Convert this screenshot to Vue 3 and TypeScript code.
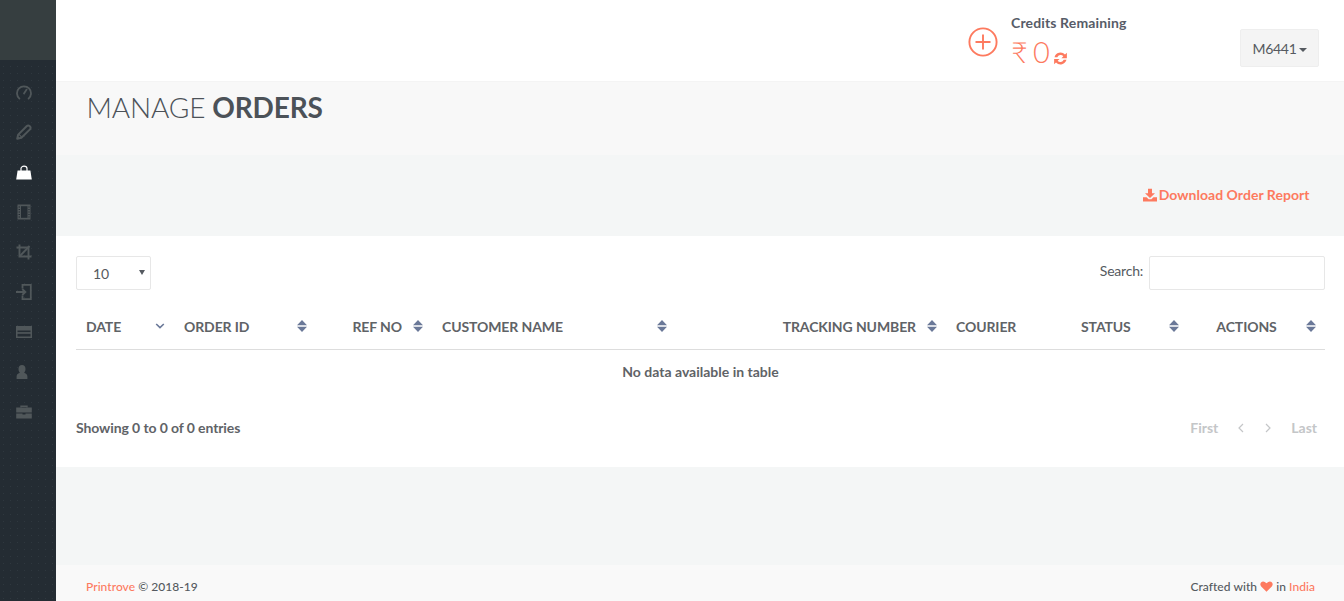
<script setup lang="ts">
interface Col { label: string; width: number; align: string; sort: string }
const cols: Col[] = [
  { label: 'DATE', width: 98, align: 'left', sort: 'down' },
  { label: 'ORDER ID', width: 142, align: 'left', sort: 'both' },
  { label: 'REF NO', width: 116, align: 'right', sort: 'both' },
  { label: 'CUSTOMER NAME', width: 244, align: 'left', sort: 'both' },
  { label: 'TRACKING NUMBER', width: 270, align: 'right', sort: 'both' },
  { label: 'COURIER', width: 125, align: 'left', sort: 'none' },
  { label: 'STATUS', width: 117, align: 'left', sort: 'both' },
  { label: 'ACTIONS', width: 137, align: 'center', sort: 'both' }
]
</script>

<template>
  <div class="page">
    <aside class="sidebar">
      <div class="brand"></div>
      <nav class="nav">
        <a class="nav-item">
          <svg viewBox="0 0 16 16" width="16" height="16"><path d="M3.4 14.6A7 7 0 1 1 12.6 14.6" fill="none" stroke="currentColor" stroke-width="1.8" stroke-linecap="round"/><path d="M8 9.4L10.6 5.6" stroke="currentColor" stroke-width="1.8" stroke-linecap="round"/></svg>
        </a>
        <a class="nav-item">
          <svg viewBox="0 0 16 16" width="16" height="16"><path d="M1.2 14.8L2.2 10.6L10.6 2.2Q12.2 .8 13.8 2.2L14 2.4Q15.2 3.8 14 5.4L5.4 13.8Z" fill="none" stroke="currentColor" stroke-width="2" stroke-linejoin="round"/><path d="M3 10.4L5.6 13" stroke="currentColor" stroke-width="1.2"/></svg>
        </a>
        <a class="nav-item active">
          <svg viewBox="0 0 16 16" width="16" height="16"><path d="M.2 15.6L1.6 6.6H14.4L15.8 15.6Z" fill="currentColor"/><path d="M5 8V4.6A3 2.4 0 0 1 11 4.6V8" fill="none" stroke="currentColor" stroke-width="1.2"/></svg>
        </a>
        <a class="nav-item">
          <svg viewBox="0 0 16 16" width="16" height="16"><path d="M1.5 .5H14.5V15.5H1.5Z" fill="currentColor"/><rect x="5" y="2.2" width="6.5" height="11.6" fill="#242c33"/><path d="M2.6 3H4M2.6 5.5H4M2.6 8H4M2.6 10.5H4M2.6 13H4M12.4 3H13.6M12.4 5.5H13.6M12.4 8H13.6M12.4 10.5H13.6M12.4 13H13.6" stroke="#242c33" stroke-width="1"/></svg>
        </a>
        <a class="nav-item">
          <svg viewBox="0 0 16 16" width="16" height="16"><path d="M3.5 .5V12.5H15.5M.5 3.5H12.5V15.5" fill="none" stroke="currentColor" stroke-width="1.9"/><path d="M3.5 12.5L13.5 2" stroke="currentColor" stroke-width="1.9"/></svg>
        </a>
        <a class="nav-item">
          <svg viewBox="0 0 16 16" width="16" height="16"><path d="M6.5 4.5V.9H14.8V15.1H6.5V11.5" fill="none" stroke="currentColor" stroke-width="1.8"/><path d="M0 8H9M6.2 5L9.4 8L6.2 11" fill="none" stroke="currentColor" stroke-width="1.8"/></svg>
        </a>
        <a class="nav-item">
          <svg viewBox="0 0 16 16" width="16" height="16"><path d="M0 2H16V14H0Z" fill="currentColor"/><rect x="1.5" y="6.5" width="13" height="1.6" fill="#242c33"/><rect x="1.5" y="9.8" width="13" height="2.7" fill="#242c33"/></svg>
        </a>
        <a class="nav-item">
          <svg viewBox="0 0 16 16" width="16" height="16"><path transform="translate(-2 0)" d="M8 1C10.2 1 11.5 2.6 11.5 4.9C11.5 6.8 10.8 7.9 10 8.8C11.6 9.6 13.4 10.4 13.4 12.4V15H2.6V12.4C2.6 10.4 4.4 9.6 6 8.8C5.2 7.9 4.5 6.8 4.5 4.9C4.5 2.6 5.8 1 8 1Z" fill="currentColor"/></svg>
        </a>
        <a class="nav-item">
          <svg viewBox="0 0 16 16" width="16" height="16"><path d="M5 3.6V2.2H11V3.6" fill="none" stroke="currentColor" stroke-width="1.4"/><path d="M.2 3.6H15.8V8.4H.2ZM.2 9.4H6.5V10.6H9.5V9.4H15.8V14.4H.2Z" fill="currentColor"/></svg>
        </a>
      </nav>
    </aside>

    <main class="main">
      <header class="topbar">
        <svg class="plus" viewBox="0 0 30 30" width="30" height="30"><circle cx="15" cy="15" r="13.6" fill="none" stroke="currentColor" stroke-width="1.9"/><path d="M15 7.5V22.5M7.5 15H22.5" stroke="currentColor" stroke-width="1.9"/></svg>
        <div class="credits">
          <div class="credits-label">Credits Remaining</div>
          <div class="credits-value">
            <span class="amount">₹ 0</span>
            <svg viewBox="0 0 16 16" width="15" height="15"><path d="M1.6 6.6A6.6 6.6 0 0 1 12.8 3.8L14.8 1.8V7.6H9L11 5.6A3.7 3.7 0 0 0 4.6 6.6ZM14.4 9.4A6.6 6.6 0 0 1 3.2 12.2L1.2 14.2V8.4H7L5 10.4A3.7 3.7 0 0 0 11.4 9.4Z" fill="currentColor"/></svg>
          </div>
        </div>
        <button class="user-btn">M6441<span class="caret"></span></button>
      </header>

      <section class="title-bar">
        <h1><span class="light">MANAGE</span> <b>ORDERS</b></h1>
      </section>

      <section class="actions-bar">
        <a class="download">
          <svg viewBox="0 0 14 14" width="14" height="14"><path d="M5 .8H9V5.2H12L7 10L2 5.2H5Z" fill="currentColor"/><path d="M0 9.2H3.6L5.6 11.2H8.4L10.4 9.2H14V13.4H0Z" fill="currentColor"/></svg>
          Download Order Report
        </a>
      </section>

      <section class="panel">
        <div class="controls">
          <div class="length-wrap">
            <select class="length"><option>10</option></select>
          </div>
          <label class="search">Search: <input type="text" /></label>
        </div>
        <table class="table">
          <colgroup>
            <col v-for="c in cols" :key="c.label" :style="{ width: c.width + 'px' }" />
          </colgroup>
          <thead>
            <tr>
              <th v-for="c in cols" :key="c.label" :class="'a-' + c.align">
                {{ c.label }}
                <svg v-if="c.sort === 'both'" class="sort" viewBox="0 0 10 12" width="10" height="12"><path d="M5 0L10 5.2H0ZM5 12L0 6.8H10Z" fill="#6a7898"/></svg>
                <svg v-else-if="c.sort === 'down'" class="sort" viewBox="0 0 10 12" width="10" height="12"><path d="M1.2 4L5 7.6L8.8 4" fill="none" stroke="#6a7898" stroke-width="1.6"/></svg>
              </th>
            </tr>
          </thead>
          <tbody>
            <tr><td colspan="8">No data available in table</td></tr>
          </tbody>
        </table>
        <div class="table-foot">
          <div class="info">Showing 0 to 0 of 0 entries</div>
          <div class="pager">
            <a>First</a>
            <a>
              <svg viewBox="0 0 8 12" width="8" height="12"><path d="M6 2L2 6L6 10" fill="none" stroke="currentColor" stroke-width="1.2"/></svg>
            </a>
            <a>
              <svg viewBox="0 0 8 12" width="8" height="12"><path d="M2 2L6 6L2 10" fill="none" stroke="currentColor" stroke-width="1.2"/></svg>
            </a>
            <a>Last</a>
          </div>
        </div>
      </section>

      <div class="spacer"></div>

      <footer class="footer">
        <div><span class="accent">Printrove</span> © 2018-19</div>
        <div class="crafted">Crafted with
          <svg viewBox="0 0 14 12" width="13" height="11"><path d="M7 11.6L1.2 6Q-.6 3.8 1 1.6Q3.6-.8 7 2.4Q10.4-.8 13 1.6Q14.6 3.8 12.8 6Z" fill="currentColor"/></svg>
          in <span class="accent">India</span></div>
      </footer>
    </main>
  </div>
</template>

<style>
html, body { margin: 0; padding: 0; }
</style>

<style scoped>
.page { display: flex; width: 1344px; height: 601px; overflow: hidden; font-family: Lato, "Liberation Sans", sans-serif; color: #555a60; font-size: 14px; }
.sidebar { width: 56px; flex: none; background-color: #242c33; background-image: radial-gradient(#2f383f 0.6px, transparent 0.8px); background-size: 7px 7px; display: flex; flex-direction: column; }
.brand { height: 60px; background: #363e40; }
.nav { display: flex; flex-direction: column; padding-top: 12px; }
.nav-item { height: 40px; display: flex; align-items: center; justify-content: center; color: #50575a; padding-right: 9px; box-sizing: border-box; }
.nav-item.active { color: #fff; }
.main { flex: 1; min-width: 0; display: flex; flex-direction: column; background: #f4f6f6; }
.topbar { height: 82px; flex: none; background: #fff; display: flex; align-items: flex-start; box-sizing: border-box; padding-left: 912px; position: relative; border-bottom: 1px solid #f4f4f4; }
.plus { color: #fd7a5f; margin-top: 27px; margin-right: 13px; flex: none; }
.credits { width: 229px; padding-top: 14px; }
.credits-label { font-size: 14px; line-height: 18px; font-weight: 700; color: #575c68; letter-spacing: 0.14px; }
.credits-value { color: #fd7a5f; display: flex; align-items: flex-end; gap: 4px; margin-top: 3px; }
.amount { font-size: 29px; line-height: 34px; font-weight: 300; letter-spacing: -1.3px; }
.credits-value svg { margin-bottom: 3px; }
.user-btn { margin-top: 29px; width: 79px; height: 38px; padding: 0 0 0 1px; border: 1px solid #eee; border-radius: 2px; background: #f4f4f4; font: 14px Lato, sans-serif; color: #555a60; flex: none; letter-spacing: -0.3px; }
.caret { display: inline-block; margin-left: 3px; vertical-align: 2px; border-top: 4px solid #555a60; border-left: 4px solid transparent; border-right: 4px solid transparent; }
.title-bar { height: 73px; flex: none; background: #f8f8f8; box-sizing: border-box; padding-left: 30.5px; }
h1 { margin: 0; font-size: 28px; line-height: 50px; font-weight: 400; color: #4c5258; letter-spacing: -0.15px; }
.light { font-weight: 300; }
.actions-bar { height: 79px; padding-bottom: 2px; flex: none; display: flex; align-items: center; justify-content: flex-end; padding-right: 34.5px; }
.download { color: #fd7a5f; font-weight: 700; font-size: 14px; display: flex; align-items: center; gap: 2px; letter-spacing: 0.04px; }
.panel { height: 231px; flex: none; background: #fff; box-sizing: border-box; padding: 20px 19px 0 20px; }
.controls { display: flex; justify-content: space-between; align-items: flex-start; height: 50px; }
.length-wrap { position: relative; width: 75px; height: 34px; }
.length-wrap::after { content: ""; position: absolute; right: 6px; top: 14px; border-top: 5px solid #555a60; border-left: 3px solid transparent; border-right: 3px solid transparent; }
.length { appearance: none; -webkit-appearance: none; width: 75px; height: 34px; box-sizing: border-box; background: #fff; border: 1px solid #e7e7e7; border-radius: 2px; padding: 0 16px; font: 14px Lato, sans-serif; color: #555a60; }
.search { display: flex; align-items: flex-start; gap: 6px; font-size: 14px; line-height: 30px; letter-spacing: -0.22px; }
.search input { width: 176px; height: 34px; box-sizing: border-box; border: 1px solid #e7e7e7; border-radius: 2px; outline: none; background: #fff; }
.table { width: 1249px; border-collapse: collapse; table-layout: fixed; }
th { height: 43px; box-sizing: border-box; padding: 0 30px 1px 10px; border-bottom: 1px solid #ddd; font-size: 14px; font-weight: 700; color: #5f6367; position: relative; white-space: nowrap; letter-spacing: -0.1px; }
.a-left { text-align: left; }
.a-right { text-align: right; }
.a-center { text-align: center; }
.sort { position: absolute; right: 9px; top: 14px; }
td { height: 44px; text-align: center; font-weight: 700; font-size: 14px; color: #5f6367; padding: 1px 0 0; box-sizing: border-box; }
.table-foot { display: flex; justify-content: space-between; align-items: center; margin-top: 22px; height: 24px; }
.info { font-weight: 700; color: #5f6367; letter-spacing: -0.1px; }
.pager { display: flex; align-items: center; gap: 13px; padding-right: 8px; color: #c4c6c8; font-weight: 700; }
.pager a { display: flex; align-items: center; min-width: 8px; margin-left: 6px; }
.pager svg { margin-top: 1px; }
.spacer { height: 98px; flex: none; }
.footer { flex: 1; background: #f9f9f9; display: flex; justify-content: space-between; align-items: center; padding: 6px 29px 0 30px; font-size: 12px; color: #555a60; font-weight: 500; letter-spacing: 0.05px; }
.accent { color: #fd7a5f; }
.crafted svg { color: #fd7a5f; vertical-align: -1px; }
</style>
